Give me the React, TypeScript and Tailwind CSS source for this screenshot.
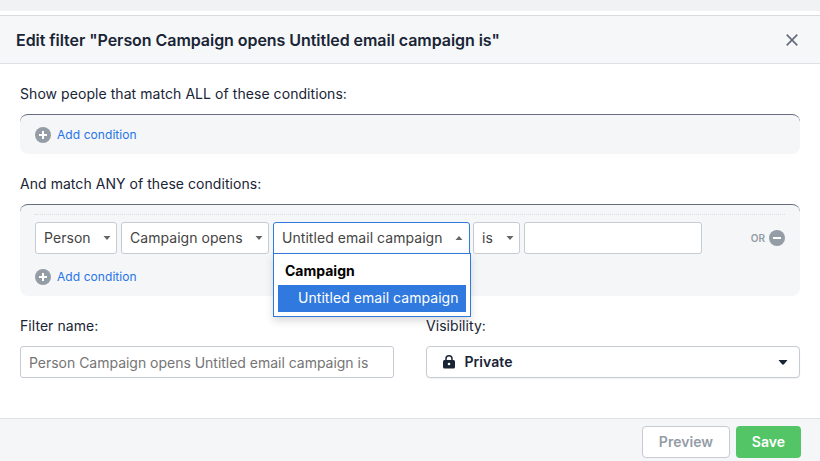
import type { ReactNode } from "react";

function Caret({ up = false }: { up?: boolean }) {
  return (
    <svg width="8" height="4" viewBox="0 0 8 4" className="shrink-0" fill="#666666">
      <path d={up ? "M0.5 4 4 0 7.5 4z" : "M0.5 0 4 4 7.5 0z"} />
    </svg>
  );
}

function RoundIcon({ plus = false }: { plus?: boolean }) {
  return (
    <svg width="16" height="16" viewBox="0 0 16 16" className="shrink-0">
      <circle cx="8" cy="8" r="8" fill="#949ca6" />
      <path d={plus ? "M4 8h8M8 4v8" : "M4 8h8"} stroke="#fff" strokeWidth="2" />
    </svg>
  );
}

function AddCondition() {
  return (
    <button className="flex h-4 items-center gap-1.5 text-[12px] leading-4 text-[#2674e8]">
      <RoundIcon plus />
      <span className="tracking-[0.07px]">Add condition</span>
    </button>
  );
}

function Select({ className, children }: { className: string; children: ReactNode }) {
  return (
    <div className={`flex h-8 shrink-0 items-center justify-between rounded-[3px] border border-[#c6cad2] bg-white pl-2 pr-[5.5px] text-[#444444] ${className}`}>
      <span className="whitespace-nowrap">{children}</span>
      <Caret />
    </div>
  );
}

export default function App() {
  return (
    <div className="flex h-[461px] w-[820px] flex-col overflow-hidden bg-white font-['Inter',sans-serif] text-[14px] leading-5 tracking-[0.05px] text-[#192435]">
      <div className="h-[11px] shrink-0 bg-[#f1f2f4]" />
      <header className="mt-1 flex h-[49px] shrink-0 items-center justify-between border-y border-t-[#d9dbdc] border-b-[#dfe1e5] bg-[#f5f7f9] pl-4 pr-[22px]">
        <h1 className="text-[16px] font-semibold tracking-[-0.05px]">Edit filter "Person Campaign opens Untitled email campaign is"</h1>
        <svg width="12" height="12" viewBox="0 0 12 12">
          <path d="M0.7 0.7 11.3 11.3M11.3 0.7 0.7 11.3" stroke="#656d7b" strokeWidth="1.7" />
        </svg>
      </header>

      <main className="flex h-[354px] shrink-0 flex-col px-5 pt-5">
        <p className="tracking-[0.06px]">Show people that match ALL of these conditions:</p>
        <section className="mt-2.5 h-10 shrink-0 rounded-lg border-t border-[#656d7e] bg-[#f5f6f8] px-[15px] pt-3">
          <AddCondition />
        </section>

        <p className="mt-5">And match ANY of these conditions:</p>
        <section className="mt-2.5 h-[92px] shrink-0 rounded-lg border-t border-[#656d7e] bg-[#f5f6f8] px-[15px] pt-[9px]">
          <div className="flex items-center border-t border-dotted border-[#d9dce1] pt-[7px]">
            <Select className="w-[82px]">Person</Select>
            <Select className="ml-1 w-[148px]">Campaign opens</Select>
            <div className="relative ml-1 h-8 w-[197px] shrink-0">
              <div className="flex h-8 items-center justify-between rounded-t-[3px] border border-[#3079df] bg-white pl-2 pr-1.5 text-[#444444]">
                <span className="whitespace-nowrap">Untitled email campaign</span>
                <Caret up />
              </div>
              <div className="absolute left-0 top-[31px] z-10 h-16 w-[198px] border border-[#3079df] bg-white px-1 pt-1 shadow-[0_4px_8px_rgba(0,0,0,0.15)]">
                <div className="flex h-[27px] items-center pb-[2px] pl-[7px] font-bold tracking-normal text-black">Campaign</div>
                <div className="flex h-[27px] items-center whitespace-nowrap bg-[#3079df] pb-[2px] pl-5 text-white">Untitled email campaign</div>
              </div>
            </div>
            <Select className="ml-[3px] w-[47px]">is</Select>
            <input className="ml-1 h-8 w-[178px] rounded-[3px] border border-[#c6cad2] bg-white" />
            <div className="ml-auto flex items-center gap-1 text-[10px] font-semibold tracking-normal text-[#949ca6]">
              OR
              <RoundIcon />
            </div>
          </div>
          <div className="mt-[15px]">
            <AddCondition />
          </div>
        </section>

        <div className="mt-5 grid grid-cols-2 gap-8">
          <div>
            <p>Filter name:</p>
            <input
              className="mt-2.5 block h-8 w-full rounded-[3px] border border-[#c6cad2] bg-white px-2 tracking-[-0.02px] placeholder:text-[#757575]"
              placeholder="Person Campaign opens Untitled email campaign is"
            />
          </div>
          <div>
            <p>Visibility:</p>
            <div className="mt-2.5 flex h-8 items-center rounded-[4px] border border-[#c6cad2] bg-white pl-4 pr-[11px] shadow-[0_1px_2px_rgba(0,0,0,0.06)]">
              <svg width="12" height="14" viewBox="0 0 12 14">
                <path d="M3 6V3.8a3 3 0 0 1 6 0V6" fill="none" stroke="#192435" strokeWidth="1.5" />
                <rect y="5" width="12" height="8.5" rx="1.5" fill="#192435" />
                <circle cx="6" cy="9" r="1.3" fill="#fff" />
              </svg>
              <span className="ml-[9.5px] font-semibold">Private</span>
              <svg width="10" height="5" viewBox="0 0 10 5" className="ml-auto">
                <path d="M0.5 0h9L6 4.3q-1 .9-2 0z" fill="#192435" />
              </svg>
            </div>
          </div>
        </div>
      </main>

      <footer className="flex h-[43px] shrink-0 items-start justify-end gap-1.5 border-t border-[#dfe1e5] bg-[#f5f6f8] pr-[19px] pt-[7px] font-semibold">
        <button className="h-8 w-[88px] rounded-[4px] border border-[#c6cad2] bg-white text-[#949ca6]">Preview</button>
        <button className="h-8 w-[65px] rounded-[4px] bg-[#53c567] text-white">Save</button>
      </footer>
    </div>
  );
}
